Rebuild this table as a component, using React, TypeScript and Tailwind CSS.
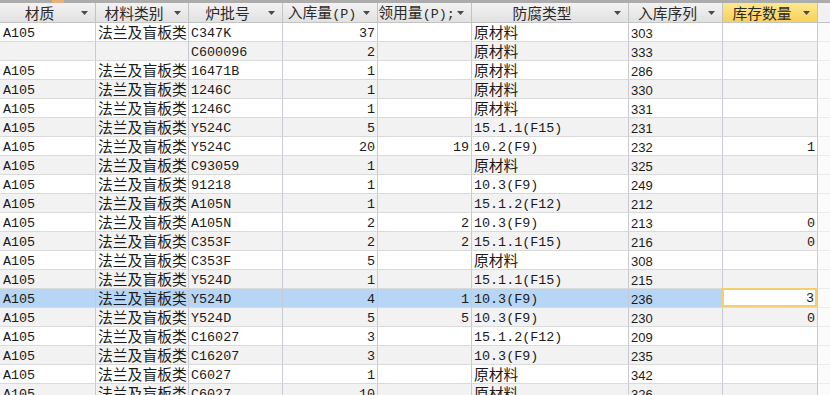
import React from "react";

type Row = {
  a: string; b: string; c: string; d: string; e: string; f: string; g: string; h: string;
};

const rows: Row[] = [
  { a: "A105", b: "法兰及盲板类", c: "C347K", d: "37", e: "", f: "原材料", g: "303", h: "" },
  { a: "", b: "", c: "C600096", d: "2", e: "", f: "原材料", g: "333", h: "" },
  { a: "A105", b: "法兰及盲板类", c: "16471B", d: "1", e: "", f: "原材料", g: "286", h: "" },
  { a: "A105", b: "法兰及盲板类", c: "1246C", d: "1", e: "", f: "原材料", g: "330", h: "" },
  { a: "A105", b: "法兰及盲板类", c: "1246C", d: "1", e: "", f: "原材料", g: "331", h: "" },
  { a: "A105", b: "法兰及盲板类", c: "Y524C", d: "5", e: "", f: "15.1.1(F15)", g: "231", h: "" },
  { a: "A105", b: "法兰及盲板类", c: "Y524C", d: "20", e: "19", f: "10.2(F9)", g: "232", h: "1" },
  { a: "A105", b: "法兰及盲板类", c: "C93059", d: "1", e: "", f: "原材料", g: "325", h: "" },
  { a: "A105", b: "法兰及盲板类", c: "91218", d: "1", e: "", f: "10.3(F9)", g: "249", h: "" },
  { a: "A105", b: "法兰及盲板类", c: "A105N", d: "1", e: "", f: "15.1.2(F12)", g: "212", h: "" },
  { a: "A105", b: "法兰及盲板类", c: "A105N", d: "2", e: "2", f: "10.3(F9)", g: "213", h: "0" },
  { a: "A105", b: "法兰及盲板类", c: "C353F", d: "2", e: "2", f: "15.1.1(F15)", g: "216", h: "0" },
  { a: "A105", b: "法兰及盲板类", c: "C353F", d: "5", e: "", f: "原材料", g: "308", h: "" },
  { a: "A105", b: "法兰及盲板类", c: "Y524D", d: "1", e: "", f: "15.1.1(F15)", g: "215", h: "" },
  { a: "A105", b: "法兰及盲板类", c: "Y524D", d: "4", e: "1", f: "10.3(F9)", g: "236", h: "3" },
  { a: "A105", b: "法兰及盲板类", c: "Y524D", d: "5", e: "5", f: "10.3(F9)", g: "230", h: "0" },
  { a: "A105", b: "法兰及盲板类", c: "C16027", d: "3", e: "", f: "15.1.2(F12)", g: "209", h: "" },
  { a: "A105", b: "法兰及盲板类", c: "C16207", d: "3", e: "", f: "10.3(F9)", g: "235", h: "" },
  { a: "A105", b: "法兰及盲板类", c: "C6027", d: "1", e: "", f: "原材料", g: "342", h: "" },
  { a: "A105", b: "法兰及盲板类", c: "C6027", d: "10", e: "", f: "原材料", g: "326", h: "" },
];

const SELECTED = 14;

const CJK = /([\u3000-\u303f\u4e00-\u9fff\uff00-\uffef]+)/;

function Mixed({ text, flat }: { text: string; flat?: boolean }) {
  const parts = text.split(CJK).filter((p) => p.length > 0);
  return (
    <>
      {parts.map((p, i) =>
        /[\u3000-\u303f\u4e00-\u9fff\uff00-\uffef]/.test(p) ? (
          <span
            key={i}
            className={`${flat ? "" : "relative -top-[1px]"} font-['Noto_Sans_CJK_SC',sans-serif] text-[14.8px] leading-[17px]`}
          >
            {p}
          </span>
        ) : (
          <span
            key={i}
            className={`${flat ? "" : "relative top-[1px]"} font-['Liberation_Mono',monospace] text-[13.4px] leading-[17px]`}
          >
            {p}
          </span>
        )
      )}
    </>
  );
}

function Arrow() {
  return (
    <svg width="7" height="4" viewBox="0 0 7 4" className="absolute right-[7px] top-[8px]">
      <path d="M0 0 H7 L3.5 4 Z" fill="#4a4a4a" />
    </svg>
  );
}

const headers = ["材质", "材料类别", "炉批号", "入库量(P)", "领用量(P);", "防腐类型", "入库序列", "库存数量"];

const grid = "grid grid-cols-[96px_93px_94px_95px_94px_157px_94px_95px_1fr]";

export default function App() {
  return (
    <div className="w-[830px] h-[395px] overflow-hidden bg-white text-[#1b1b1b] leading-[17px]">
      <div className="h-[3px] bg-[#acacac] flex">
        <div className="w-[52px]" />
        <div className="w-[12px] bg-[#e9b07a]" />
      </div>
      <div className={`${grid} h-[20px] border-b border-[#c4c4c4]`}>
        {headers.map((h, i) => (
          <div
            key={i}
            className={`relative h-[19px] border-r border-[#c2c2c2] overflow-hidden whitespace-nowrap pr-[16px] flex items-center justify-center text-[#2a2a2a] ${
              i === 7
                ? "bg-[linear-gradient(#fde891,#f8d05a)]"
                : "bg-[linear-gradient(#f3f3f3,#e1e1e1)]"
            }`}
          >
            <span className="leading-[17px]">
              <Mixed text={h} flat />
            </span>
            <Arrow />
          </div>
        ))}
        <div className="h-[19px] bg-[#f1f1f1]" />
      </div>
      {rows.map((r, ri) => {
        const sel = ri === SELECTED;
        const bg = sel ? "bg-[#b7d6f6]" : ri % 2 === 0 ? "bg-white" : "bg-[#f2f2f2]";
        const cell = `h-[19px] pt-[1px] border-r border-b border-r-[#c9c9d3] border-b-[#dadada] overflow-hidden whitespace-nowrap flex items-center ${bg}`;
        return (
          <div key={ri} className={grid}>
            <div className={`${cell} pl-[3px]`}>
              <Mixed text={r.a} />
            </div>
            <div className={`${cell} pl-[2px]`}>
              <Mixed text={r.b} />
            </div>
            <div className={`${cell} pl-[2px]`}>
              <Mixed text={r.c} />
            </div>
            <div className={`${cell} justify-end pr-[2px]`}>
              <Mixed text={r.d} />
            </div>
            <div className={`${cell} justify-end pr-[2px]`}>
              <Mixed text={r.e} />
            </div>
            <div className={`${cell} pl-[2px]`}>
              <Mixed text={r.f} />
            </div>
            <div className={`${cell} pl-[2px] font-['Liberation_Sans',sans-serif] text-[13px]`}>
              <span className="relative top-[1px]">{r.g}</span>
            </div>
            {sel ? (
              <div className="h-[19px] border-r border-b border-r-[#c9c9d3] border-b-[#dadada] bg-white flex">
                <div className="flex-1 border-2 border-[#f3d06a] flex items-center justify-end pr-[1px] -ml-[1px] -mt-[1px]">
                  <Mixed text={r.h} />
                </div>
              </div>
            ) : (
              <div className={`${cell} justify-end pr-[2px]`}>
                <Mixed text={r.h} />
              </div>
            )}
            <div className="h-[19px] border-b border-[#ececec] bg-[#fbfbfb]" />
          </div>
        );
      })}
    </div>
  );
}
